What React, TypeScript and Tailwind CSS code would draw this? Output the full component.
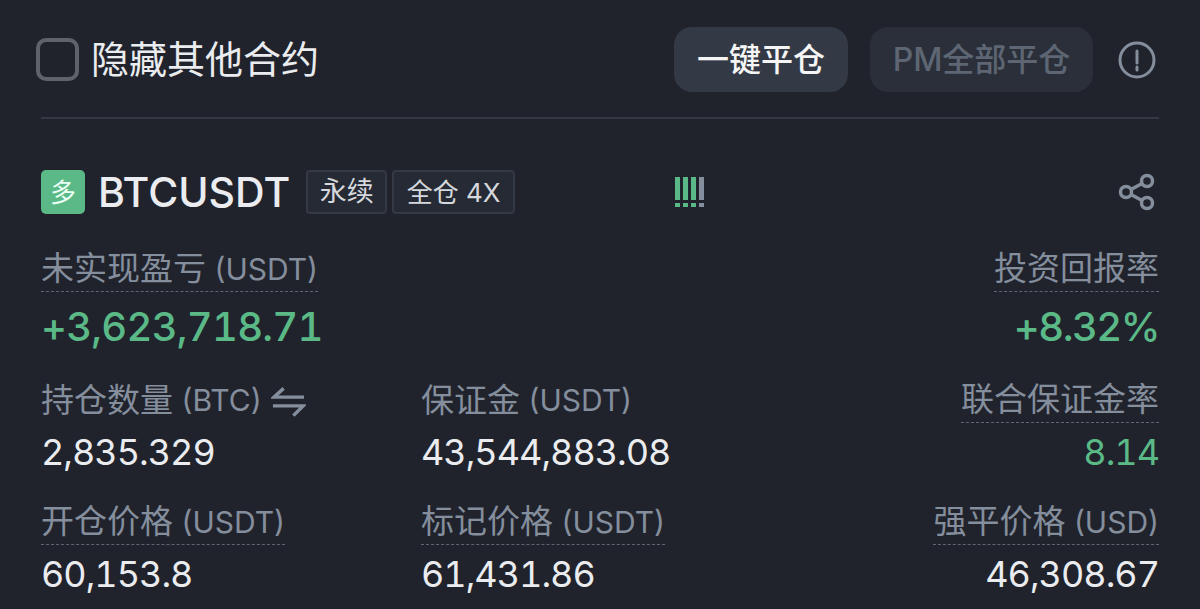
import React from "react";

function Stat({ label, unit, value, dashed = true, align = "left", color = "text-[#eaecef]", valueClass = "mt-[7px] text-[36px] tracking-[-1px]", icon }: { label: string; unit?: string; value: string; dashed?: boolean; align?: "left" | "right"; color?: string; valueClass?: string; icon?: React.ReactNode }) {
  return (
    <div className={`flex flex-col ${align === "right" ? "items-end" : "items-start"}`}>
      <div className={`flex items-center h-[47px] pt-[2px] text-[33px] text-[#848e9c] whitespace-pre ${dashed ? "border-b border-dashed border-[#5e6673]" : ""}`}>
        {label}
        {unit ? <span className="text-[30px]"> {unit}</span> : null}
        {icon}
      </div>
      <div className={`h-[44px] leading-[44px] tabular-nums whitespace-nowrap ${valueClass} ${color}`}>{value}</div>
    </div>
  );
}

export default function App() {
  return (
    <div className="w-[1200px] h-[609px] overflow-hidden bg-[#20232c] px-[41px] font-['Inter','Noto_Sans_CJK_SC',sans-serif]">
      <div className="flex items-center h-[119px] pt-[2px] border-b-2 border-[#333945]">
        <div className="w-[43px] h-[43px] -ml-[5px] rounded-[10px] border-[4px] border-[#5e6269]" />
        <div className="ml-[12px] text-[38px] text-[#eaecef] whitespace-nowrap">隐藏其他合约</div>
        <div className="ml-auto flex items-center mr-[3px]">
          <button className="w-[174px] h-[65px] rounded-[18px] bg-[#333945] text-[#f5f5f5] text-[32px] font-medium">一键平仓</button>
          <button className="ml-[22px] w-[223px] h-[65px] rounded-[18px] bg-[#2a2f3a] text-[#5e6673] text-[32px] font-medium whitespace-nowrap">PM全部平仓</button>
          <svg className="ml-[25px]" width="38" height="38" viewBox="0 0 38 38" fill="none" stroke="#848e9c" strokeWidth="3">
            <circle cx="19" cy="19" r="17" />
            <path d="M19 10v12M19 26v3" strokeLinecap="round" />
          </svg>
        </div>
      </div>

      <div className="flex items-center mt-[51px] h-[44px]">
        <div className="w-[44px] h-[44px] rounded-[5px] bg-[#5ab987] text-[#eafff3] text-[26px] flex items-center justify-center">多</div>
        <div className="ml-[13px] text-[41px] leading-[44px] font-medium text-[#eaecef]">BTCUSDT</div>
        <div className="ml-[16px] w-[81px] h-[44px] rounded-[4px] border-2 border-[#333945] bg-[#262a34] text-[#d5d8dc] text-[27px] flex items-center justify-center">永续</div>
        <div className="ml-[5px] w-[123px] h-[44px] rounded-[4px] border-2 border-[#333945] bg-[#262a34] text-[#d5d8dc] text-[26px] flex items-center justify-center whitespace-nowrap">全仓 4X</div>
        <svg className="ml-[160px]" width="31" height="31" viewBox="0 0 31 31">
          <g fill="#5ab987">
            <rect x="0" y="0" width="5" height="23" /><rect x="0" y="26" width="5" height="4" />
            <rect x="8" y="0" width="5" height="23" /><rect x="8" y="26" width="5" height="4" />
            <rect x="16" y="0" width="5" height="23" /><rect x="16" y="26" width="5" height="4" />
          </g>
          <g fill="#848e9c">
            <rect x="24" y="0" width="5" height="23" /><rect x="24" y="26" width="5" height="4" />
          </g>
        </svg>
        <svg className="ml-auto mr-[3px]" width="38" height="38" viewBox="0 0 38 38" fill="none" stroke="#848e9c" strokeWidth="3.5">
          <circle cx="8" cy="19" r="5.5" />
          <circle cx="29" cy="8" r="5.5" />
          <circle cx="29" cy="30" r="5.5" />
          <path d="M13 16.5 24 10.5M13 21.5 24 27.5" />
        </svg>
      </div>

      <div className="flex justify-between mt-[31px]">
        <Stat label="未实现盈亏" unit="(USDT)" value="+3,623,718.71" valueClass="mt-[13px] text-[40px] font-medium tracking-[-0.75px]" color="text-[#5ab987]" />
        <Stat label="投资回报率" value="+8.32%" align="right" valueClass="mt-[13px] text-[40px] font-medium tracking-[-1.5px]" color="text-[#5ab987]" />
      </div>

      <div className="grid grid-cols-[380px_1fr_auto] mt-[27px]">
        <Stat label="持仓数量" unit="(BTC)" value="2,835.329" dashed={false} icon={
          <svg className="ml-[9px] mt-[2px]" width="35" height="30" viewBox="0 0 36 30" fill="none" stroke="#848e9c" strokeWidth="3.5">
            <path d="M34 10H3L13 1M2 19H33L23 29" />
          </svg>
        } />
        <Stat label="保证金" unit="(USDT)" value="43,544,883.08" dashed={false} />
        <Stat label="联合保证金率" value="8.14" align="right" color="text-[#5ab987]" />
      </div>

      <div className="grid grid-cols-[380px_1fr_auto] mt-[24px]">
        <Stat label="开仓价格" unit="(USDT)" value="60,153.8" />
        <Stat label="标记价格" unit="(USDT)" value="61,431.86" />
        <Stat label="强平价格" unit="(USD)" value="46,308.67" align="right" />
      </div>
    </div>
  );
}
